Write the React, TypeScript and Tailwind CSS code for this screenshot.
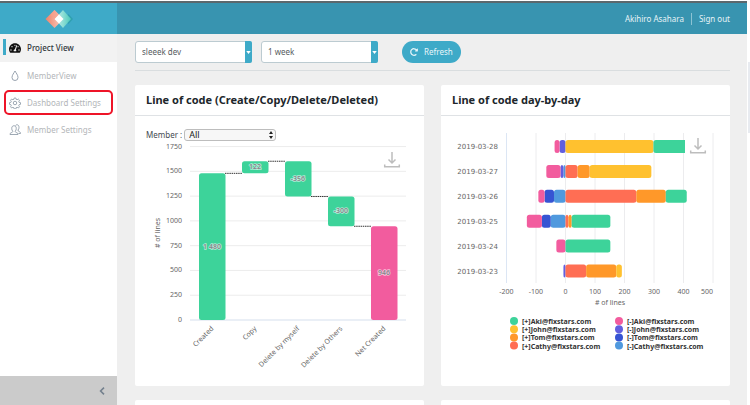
import React from "react";
import { FaTachometerAlt, FaRedoAlt } from "react-icons/fa";

const GREEN = "#3dd39a";
const YELLOW = "#ffc12f";
const ORANGE = "#ff9829";
const CORAL = "#ff6e54";
const PINK = "#f25c9e";
const PURPLE = "#625fdf";
const NAVY = "#3654d3";
const BLUE = "#5099de";

const FONT = "font-['Noto_Sans','Open_Sans',sans-serif]";

function Logo() {
  return (
    <svg viewBox="0 0 28 18" className="h-[18px] w-7" aria-label="Home">
      <defs>
        <linearGradient id="warm" x1="0" x2="1">
          <stop offset="0" stopColor="#f08268" />
          <stop offset="1" stopColor="#fbd3c8" />
        </linearGradient>
        <linearGradient id="cool" x1="0" x2="1">
          <stop offset="0" stopColor="#d9f7f0" />
          <stop offset="1" stopColor="#4fcdbb" />
        </linearGradient>
      </defs>
      <path d="M19 9 23.500 4 28 9l-4.500 5z" fill="#2f9fb0" />
      <path d="M9.500 0l9 9-9 9-9-9z" fill="url(#warm)" />
      <path d="M18 0l8 9-8 9-8-9z" fill="url(#cool)" opacity=".92" />
      <path d="M14 4.500 18.500 9 14 13.500 9.500 9z" fill="#fff" />
      <path d="M9.500 0l4 4.500-4 4.500-4-4.500z" fill="#f9a08c" opacity=".6" />
    </svg>
  );
}

function DropIcon() {
  return (
    <svg viewBox="0 0 12 12" className="size-3" fill="none" stroke="currentColor" strokeWidth=".9">
      <path d="M6 1C5 3 3 5 3 7.500a3 3 0 0 0 6 0C9 5 7 3 6 1z" />
    </svg>
  );
}

function GearIcon() {
  return (
    <svg viewBox="0 0 24 24" className="size-3" fill="none" stroke="currentColor" strokeWidth="1.700" strokeLinejoin="round">
      <circle cx="12" cy="12" r="3.500" />
      <path d="M10.300 2h3.400l.6 2.700 1.900.8 2.400-1.500 2.400 2.400-1.500 2.400.8 1.900 2.700.6v3.400l-2.700.6-.8 1.900 1.500 2.400-2.400 2.400-2.400-1.500-1.900.8-.6 2.700h-3.400l-.6-2.700-1.900-.8-2.400 1.500L3 19.600l1.500-2.400-.8-1.900L1 14.700v-3.400l2.700-.6.8-1.900L3 6.400 5.400 4l2.400 1.500 1.900-.8z" />
    </svg>
  );
}

function UsersIcon() {
  return (
    <svg viewBox="0 0 24 24" className="size-3" fill="none" stroke="currentColor" strokeWidth="1.700" strokeLinejoin="round">
      <path d="M7.500 14.500c-1.500-1.500-2-3.500-2-6C5.500 5 7.500 3.500 10 3.500s4.500 1.500 4.500 5c0 2.500-.5 4.500-2 6 0 2 1 2.200 3.500 3 1.500.5 2 1.500 2 3.500H2c0-2 .5-3 2-3.500 2.500-.8 3.500-1 3.500-3z" />
      <path d="M13 3c1-1.300 2-1.500 3-1.500 2.500 0 4 2 4 5 0 2.500-.5 4-2 5.500 0 2 .7 2.500 2.500 3.200 1.800.6 2.500 1.500 2.500 3.800h-4" />
    </svg>
  );
}

function DownloadMark({ x, y }: { x: number; y: number }) {
  return (
    <g transform={`translate(${x} ${y})`} fill="none" stroke="#bdbdbd" strokeWidth="1.500">
      <path d="M8 0v11M4.500 7.500 8 11l3.500-3.500M.7 12.500v2.200h14.600v-2.200" />
    </g>
  );
}

function FilterSelect({ label, options }: { label: string; options: string[] }) {
  return (
    <div className="relative h-[22px] w-[117px]">
      <select
        aria-label={label}
        className="h-full w-full appearance-none rounded-[3px] border border-[#bccbd1] bg-white pl-1.5 text-[8px] leading-3 text-[#555b60]"
      >
        {options.map((o) => (
          <option key={o}>{o}</option>
        ))}
      </select>
      <span className="pointer-events-none absolute inset-y-0 right-0 flex w-[7px] items-center justify-center rounded-r-[2px] bg-[#3eaac8]">
        <svg viewBox="0 0 6 4" className="h-[3px] w-[5px]" fill="#fff">
          <path d="M0 0h6L3 4z" />
        </svg>
      </span>
    </div>
  );
}

const navItems = [
  { label: "Project View", icon: <FaTachometerAlt className="size-3" />, active: true },
  { label: "MemberView", icon: <DropIcon /> },
  { label: "Dashboard Settings", icon: <GearIcon />, marked: true },
  { label: "Member Settings", icon: <UsersIcon /> },
];

function Sidebar() {
  return (
    <aside className="flex w-[117px] shrink-0 flex-col bg-white">
      <nav className="flex-1">
        {navItems.map((item) => (
          <a
            key={item.label}
            href="#"
            className={
              item.active
                ? "relative flex h-7 items-center gap-1.5 bg-[#f2f2f2] pl-[9px] font-medium text-[#30363b]"
                : "relative flex h-[27px] items-center gap-1.5 pl-[9px] text-[#b3b6b9]"
            }
          >
            {item.active && <span className="absolute top-[5px] left-[3px] h-4 w-[3px] bg-[#3eaac8]" />}
            <span className={item.active ? "text-[#111]" : "text-[#8d99a6]"}>{item.icon}</span>
            {item.label}
            {item.marked && (
              <span className="pointer-events-none absolute inset-y-px right-1 left-1 rounded-[5px] border-2 border-[#ee1428]" />
            )}
          </a>
        ))}
      </nav>
      <button
        type="button"
        aria-label="Collapse sidebar"
        className="flex h-[29px] items-center justify-end bg-[#cbcbcb] pr-3 text-[#74818e]"
      >
        <svg viewBox="0 0 6 8" className="h-2 w-1.5" fill="none" stroke="currentColor" strokeWidth="1.600">
          <path d="M5 .6 1.600 4 5 7.400" />
        </svg>
      </button>
    </aside>
  );
}

const steps = [
  { name: "Created", from: 0, to: 1480, label: "1 480", color: GREEN },
  { name: "Copy", from: 1480, to: 1602, label: "122", color: GREEN },
  { name: "Delete by myself", from: 1602, to: 1246, label: "-356", color: GREEN },
  { name: "Delete by Others", from: 1246, to: 946, label: "-300", color: GREEN },
  { name: "Net Created", from: 946, to: 0, label: "946", color: PINK },
];

function WaterfallChart() {
  const y = (v: number) => 179 - v * 0.0991;
  const x = (i: number) => 64 + i * 43;
  const ticks = [0, 250, 500, 750, 1000, 1250, 1500, 1750];
  return (
    <svg viewBox="0 0 289 245" className="block w-full" role="img" aria-label="Line of code">
      <g fontSize="7" fill="#666">
        {ticks.map((t) => (
          <g key={t}>
            <path d={`M55 ${y(t)}H271`} stroke={t === 0 ? "#e3eaf3" : "#ececec"} strokeWidth={t === 0 ? 1.5 : 1} />
            <text x="47" y={y(t) + 2} textAnchor="end">{t}</text>
          </g>
        ))}
        <text transform="translate(25 92) rotate(-90)" textAnchor="middle"># of lines</text>
        {steps.map((s, i) => {
          const top = y(Math.max(s.from, s.to));
          const height = y(Math.min(s.from, s.to)) - top;
          return (
            <g key={s.name}>
              {i < 4 && <path d={`M${x(i) + 26} ${y(s.to)}h17`} stroke="#333" strokeDasharray="1.500 .7" />}
              <rect x={x(i)} y={top} width="26.500" height={height} rx="2.500" fill={s.color} />
              <text
                x={x(i) + 13}
                y={top + height / 2 + 2}
                textAnchor="middle"
                fill="#85858c"
                stroke="#fff"
                strokeOpacity=".6"
                strokeWidth="1.500"
                paintOrder="stroke"
                className="font-semibold"
              >
                {s.label}
              </text>
              <text transform={`translate(${x(i) + 15} 188) rotate(-45)`} textAnchor="end">{s.name}</text>
            </g>
          );
        })}
      </g>
      <DownloadMark x={249} y={11} />
    </svg>
  );
}

type Part = [number, string];
const days: { date: string; minus: Part[]; plus: Part[]; cut?: boolean }[] = [
  { date: "2019-03-28", minus: [[20, PURPLE], [17, PINK]], plus: [[298, YELLOW], [107, GREEN]], cut: true },
  { date: "2019-03-27", minus: [[7, BLUE], [10, PURPLE], [48, PINK]], plus: [[41, CORAL], [41, ORANGE], [209, YELLOW]] },
  { date: "2019-03-26", minus: [[39, BLUE], [32, NAVY], [21, PINK]], plus: [[240, CORAL], [100, ORANGE], [71, GREEN]] },
  { date: "2019-03-25", minus: [[50, BLUE], [30, NAVY], [51, PINK]], plus: [[10, CORAL], [11, ORANGE], [131, GREEN]] },
  { date: "2019-03-24", minus: [[31, PINK]], plus: [[152, GREEN]] },
  { date: "2019-03-23", minus: [[7, PURPLE]], plus: [[70, CORAL], [102, ORANGE], [19, YELLOW]] },
];

const legend: [string, string][][] = [
  [["[+]Aki@fixstars.com", GREEN], ["[+]John@fixstars.com", YELLOW], ["[+]Tom@fixstars.com", ORANGE], ["[+]Cathy@fixstars.com", CORAL]],
  [["[-]Aki@fixstars.com", PINK], ["[-]John@fixstars.com", PURPLE], ["[-]Tom@fixstars.com", NAVY], ["[-]Cathy@fixstars.com", BLUE]],
];

function DailyChart() {
  const x = (v: number) => 124.5 + v * 0.295;
  const bars = (parts: Part[], sign: number, top: number) => {
    let sum = 0;
    return parts.map(([v, color], i) => {
      const a = x(sign * sum);
      sum += v;
      const b = x(sign * sum);
      return <rect key={i} x={Math.min(a, b)} y={top} width={Math.abs(b - a)} height="13" rx="2.500" fill={color} />;
    });
  };
  return (
    <svg viewBox="0 0 289 270" className="block w-full" role="img" aria-label="Line of code day-by-day">
      <g fontSize="7" fill="#666">
        {[-200, -100, 0, 100, 200, 300, 400, 500].map((t) => (
          <g key={t}>
            <path d={`M${x(t)} 17V167`} stroke={t === -200 ? "#dce6f4" : "#ececee"} />
            <text x={t === 500 ? 272 : x(t)} y="178" textAnchor={t === 500 ? "end" : "middle"}>{t}</text>
          </g>
        ))}
        {days.map((d, i) => (
          <g key={d.date}>
            <text x="57" y={33 + i * 25} textAnchor="end" className="font-['DejaVu_Sans',sans-serif]">{d.date}</text>
            {bars(d.minus, -1, 24 + i * 24.9)}
            {bars(d.plus, 1, 24 + i * 24.9)}
            {d.cut && <rect x="240" y="24" width="4" height="13" fill={GREEN} />}
          </g>
        ))}
        <text x="169" y="189" textAnchor="middle"># of lines</text>
        {legend.map((col, c) =>
          col.map(([name, color], r) => (
            <g key={name}>
              <circle cx={73 + c * 105} cy={205 + r * 8.2} r="4" fill={color} />
              <text x={81 + c * 105} y={208 + r * 8.2} fill="#333" className="font-bold">{name}</text>
            </g>
          ))
        )}
      </g>
      <DownloadMark x={249} y={22} />
    </svg>
  );
}

function Card({ title, children }: { title: string; children: React.ReactNode }) {
  return (
    <section className="rounded-[2px] bg-white">
      <h2 className="flex h-[31px] items-center border-b border-[#dfe2e5] pl-[11px] text-[11px] leading-4 font-bold text-[#20262b]">
        {title}
      </h2>
      {children}
    </section>
  );
}

export default function App() {
  return (
    <div className={`flex h-screen overflow-hidden bg-white text-[8px] ${FONT}`}>
      <div className="flex min-w-0 flex-1 flex-col pt-px">
        <header className="flex h-[33px] shrink-0 items-stretch border-t-2 border-[#5b686d] bg-[#3894b0] text-[#e6f3f7]">
          <div className="flex w-[117px] items-center justify-center bg-[#3eaac8]">
            <Logo />
          </div>
          <div className="flex flex-1 items-center justify-end pr-[17px]">
            <a href="#">Akihiro Asahara</a>
            <a href="#" className="ml-[7px] border-l border-[#8cc3d3] pl-[7px]">Sign out</a>
          </div>
        </header>
        <div className="flex min-h-0 flex-1">
          <Sidebar />
          <main className="min-w-0 flex-1 overflow-hidden bg-[#efefef] pt-[7px] pr-[17px] pl-[18px]">
            <div className="flex h-[30px] items-start gap-[9px] border-b border-[#d9dddf]">
              <FilterSelect label="Project" options={["sleeek dev"]} />
              <FilterSelect label="Period" options={["1 week", "2 weeks"]} />
              <button
                type="button"
                className="ml-[15px] flex h-[22px] items-center gap-1.5 rounded-full bg-[#3eaac8] px-2 text-[#e9f6fa]"
              >
                <FaRedoAlt className="size-2" />
                Refresh
              </button>
            </div>
            <div className="mt-3.5 grid grid-cols-2 gap-x-[17px] gap-y-3.5">
              <Card title="Line of code (Create/Copy/Delete/Deleted)">
                <div className="flex h-[25px] items-end gap-0.5 pl-[11px]">
                  <label htmlFor="member" className="leading-3 text-[#444a50]">Member :</label>
                  <div className="relative h-3">
                    <select
                      id="member"
                      className="block h-3 w-[92px] appearance-none rounded-[3px] border border-[#bdbdbd] bg-[#f7f7f7] pl-1 text-[9px] leading-[10px] text-[#222]"
                    >
                      <option>All</option>
                    </select>
                    <svg viewBox="0 0 4 8" className="pointer-events-none absolute top-0.5 right-[3px] h-2 w-1" fill="#222">
                      <path d="M2 0l2 3H0zM2 8 0 5h4z" />
                    </svg>
                  </div>
                </div>
                <WaterfallChart />
              </Card>
              <Card title="Line of code day-by-day">
                <DailyChart />
              </Card>
              <section className="h-72 rounded-[2px] bg-white" />
              <section className="h-72 rounded-[2px] bg-white" />
            </div>
          </main>
        </div>
      </div>
      <div className="w-[3px] shrink-0 bg-white pt-[62px]">
        <div className="ml-px h-[71px] bg-[#e8ebf0]" />
      </div>
    </div>
  );
}
